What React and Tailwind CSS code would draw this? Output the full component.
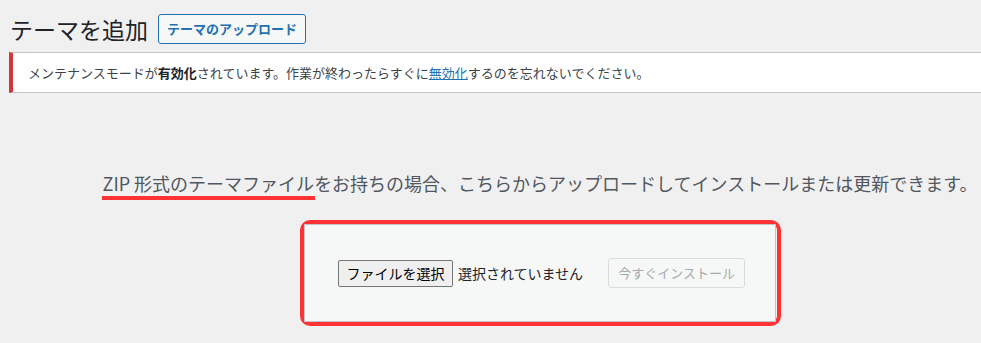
import React from 'react';

const font = { fontFamily: '"Noto Sans CJK JP", "Noto Sans", sans-serif' };

const App = () => {
    return (
        <div className="w-[981px] h-[343px] overflow-hidden bg-[#f0f0f1]" style={font}>
            <div className="w-[1080px]">
                {/* header */}
                <div className="flex items-center pl-[10px] pt-[14px] h-[44px]">
                    <h1 className="text-[23px] leading-[30px] text-[#1d2327] font-normal mr-[10px]">テーマを追加</h1>
                    <button className="h-[30px] px-[8px] border border-[#2271b1] rounded-[3px] bg-[#f6f7f7] text-[#2271b1] text-[13px] font-semibold leading-[28px]">
                        テーマのアップロード
                    </button>
                </div>

                {/* maintenance notice */}
                <div className="ml-[9px] mt-[8px] h-[41px] bg-white border-y border-[#c3c4c7] border-l-4 border-l-[#d63638] flex items-center pl-[15px]">
                    <p className="text-[13px] text-[#3c434a] leading-[20px]">
                        メンテナンスモードが<strong className="font-bold text-[#1d2327]">有効化</strong>されています。作業が終わったらすぐに<a href="#" className="text-[#2271b1] underline">無効化</a>するのを忘れないでください。
                    </p>
                </div>

                {/* upload area */}
                <div className="flex flex-col items-center pt-[77px]">
                    <p className="text-[18px] leading-[27px] text-[#50575e] text-center">
                        <span className="relative">
                            ZIP 形式のテーマファイル
                            <span className="absolute left-[-1px] right-[-1px] bottom-[-4px] h-[4px] bg-[#ff3333]"></span>
                        </span>
                        をお持ちの場合、こちらからアップロードしてインストールまたは更新できます。
                    </p>

                    <div className="mt-[23px] w-[481px] h-[106px] border-4 border-[#ff3333] rounded-[10px] flex">
                        <div className="flex-1 mr-[1px] border border-[#c3c4c7] bg-[#f6f7f7] flex items-center justify-center pl-[4px]">
                            <button className="h-[27px] w-[115px] border border-[#767676] rounded-[2px] bg-[#efefef] text-[14px] text-black leading-[25px]">
                                ファイルを選択
                            </button>
                            <span className="ml-[5px] text-[14px] text-[#1d2327] leading-[20px]">選択されていません</span>
                            <button disabled className="ml-[25px] h-[30px] w-[137px] border border-[#dcdcde] rounded-[3px] bg-[#f6f7f7] text-[13px] text-[#a7aaad] leading-[28px]">
                                今すぐインストール
                            </button>
                        </div>
                    </div>
                </div>
            </div>
        </div>
    );
};

export default App;
